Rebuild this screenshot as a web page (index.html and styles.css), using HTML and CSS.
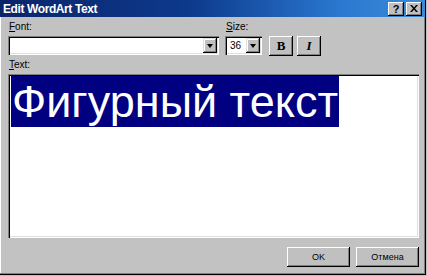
FILE: index.html
```html
<!DOCTYPE html>
<html>
<head>
<meta charset="utf-8">
<link rel="stylesheet" href="styles.css">
</head>
<body>
<div class="window">
  <div class="titlebar">
    <span class="title">Edit WordArt Text</span>
    <div class="tbtns">
      <span class="tbtn help">?</span>
      <span class="tbtn close">
        <svg width="8" height="7" viewBox="0 0 8 7"><path d="M0 0h2l2 2.5L6 0h2L5 3.5 8 7H6L4 4.5 2 7H0l3-3.5z" fill="#000"/></svg>
      </span>
    </div>
  </div>
  <div class="body">
    <div class="toprow">
      <div class="group fontgroup">
        <label class="lbl"><u>F</u>ont:</label>
        <div class="combo fontcombo">
          <div class="field"></div>
          <span class="dropbtn"><i class="arrow"></i></span>
        </div>
      </div>
      <div class="group sizegroup">
        <label class="lbl"><u>S</u>ize:</label>
        <div class="combo sizecombo">
          <div class="field">36</div>
          <span class="dropbtn"><i class="arrow"></i></span>
        </div>
      </div>
      <div class="fmtbtns">
        <span class="fmt bold">B</span>
        <span class="fmt italic">I</span>
      </div>
    </div>
    <label class="lbl textlbl"><u>T</u>ext:</label>
    <div class="textarea">
      <span class="sel">Фигурный текст</span>
    </div>
    <div class="actions">
      <span class="btn">OK</span>
      <span class="btn">Отмена</span>
    </div>
  </div>
</div>
</body>
</html>
```
FILE: styles.css
```css
html, body {
  margin: 0;
  padding: 0;
}
body {
  width: 427px;
  height: 276px;
  background: #c0c0c0;
  overflow: hidden;
  font-family: "Liberation Sans", Arial, sans-serif;
}
.window {
  width: 426px;
  height: 275px;
  background: #c2c2c2;
  box-sizing: border-box;
  border-right: 1px solid #000;
  border-bottom: 1px solid #000;
  box-shadow: inset -1px -1px 0 #808080, inset 1px 0 0 #fff;
  display: flex;
  flex-direction: column;
}
.titlebar {
  height: 17px;
  background: linear-gradient(to right, #0a246a 0%, #0d3a8c 45%, #2a78d0 80%, #3c8ad8 100%);
  display: flex;
  align-items: center;
  justify-content: space-between;
  padding: 0 3px 0 3px;
}
.title {
  color: #fff;
  font-weight: bold;
  font-size: 12px;
  letter-spacing: -0.4px;
}
.tbtns {
  display: flex;
  gap: 2px;
}
.tbtn {
  width: 16px;
  height: 14px;
  box-sizing: border-box;
  background: #c0c0c0;
  box-shadow: inset -1px -1px 0 #000, inset 1px 1px 0 #fff, inset -2px -2px 0 #808080;
  display: flex;
  align-items: center;
  justify-content: center;
  font-weight: bold;
  font-size: 11px;
  color: #000;
}
.body {
  flex: 1;
  display: flex;
  flex-direction: column;
  padding: 4px 5px 0 8px;
}
.toprow {
  display: flex;
  align-items: flex-end;
}
.group {
  display: flex;
  flex-direction: column;
}
.lbl {
  font-size: 10px;
  color: #000;
  line-height: 12px;
  height: 12px;
}
.fontgroup .lbl, .sizegroup .lbl {
  margin-bottom: 3px;
  margin-left: 1px;
}
.fontgroup { width: 211px; }
.sizegroup { margin-left: 6px; width: 37px; }
.combo {
  height: 19px;
  box-sizing: border-box;
  background: #fff;
  box-shadow: inset 1px 1px 0 #808080, inset 2px 2px 0 #000, inset -1px -1px 0 #fff, inset -2px -2px 0 #dfdfdf;
  display: flex;
  padding: 2px;
}
.field {
  flex: 1;
  font-size: 10px;
  line-height: 15px;
  padding-left: 3px;
}
.dropbtn {
  width: 14px;
  height: 15px;
  box-sizing: border-box;
  background: #c0c0c0;
  box-shadow: inset -1px -1px 0 #000, inset 1px 1px 0 #dfdfdf, inset -2px -2px 0 #808080, inset 2px 2px 0 #fff;
  display: flex;
  align-items: center;
  justify-content: center;
}
.arrow {
  width: 0;
  height: 0;
  border-left: 3px solid transparent;
  border-right: 3px solid transparent;
  border-top: 4px solid #000;
}
.fmtbtns {
  display: flex;
  gap: 4px;
  margin-left: 7px;
  margin-bottom: -1px;
}
.fmt {
  width: 24px;
  height: 20px;
  box-sizing: border-box;
  background: #c0c0c0;
  box-shadow: inset -1px -1px 0 #000, inset 1px 1px 0 #fff, inset -2px -2px 0 #808080;
  display: flex;
  align-items: center;
  justify-content: center;
  font-family: "Liberation Serif", "Times New Roman", serif;
  font-weight: bold;
  font-size: 13px;
}
.fmt.italic { font-style: italic; }
.textlbl {
  margin-top: 4px;
  margin-left: 1px;
}
.textarea {
  margin-top: 3px;
  height: 164px;
  margin-right: 1px;
  box-sizing: border-box;
  background: #fff;
  box-shadow: inset 1px 1px 0 #808080, inset 2px 2px 0 #000, inset -1px -1px 0 #fff, inset -2px -2px 0 #dfdfdf;
  padding: 2px 2px 0 3px;
}
.sel {
  display: inline-block;
  background: #000080;
  color: #fff;
  font-size: 45px;
  line-height: 51px;
  padding: 0 1px;
}
.actions {
  display: flex;
  justify-content: flex-end;
  gap: 6px;
  margin-top: 9px;
  margin-right: 1px;
}
.btn {
  width: 63px;
  height: 20px;
  box-sizing: border-box;
  background: #c0c0c0;
  box-shadow: inset -1px -1px 0 #000, inset 1px 1px 0 #fff, inset -2px -2px 0 #808080;
  display: flex;
  align-items: center;
  justify-content: center;
  font-size: 9px;
  color: #000;
}
```
